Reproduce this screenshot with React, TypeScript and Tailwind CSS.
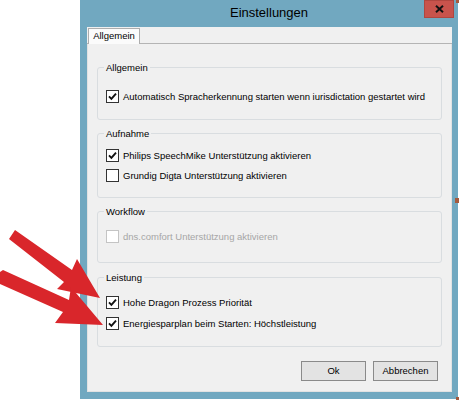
import { ReactNode } from "react";

const font = { fontFamily: '"Liberation Sans", Arial, sans-serif' };

const Check = ({ checked, disabled }: { checked?: boolean; disabled?: boolean }) => (
  <span
    className={`flex h-[13px] w-[13px] shrink-0 items-center justify-center border bg-white ${
      disabled ? "border-[#c4c4c4]" : "border-[#333333]"
    }`}
  >
    {checked && (
      <svg width="9" height="9" viewBox="0 0 9 9">
        <path d="M1 4.4 L3.4 6.8 L8 1.6" fill="none" stroke="#111" strokeWidth="1.9" />
      </svg>
    )}
  </span>
);

const Row = ({ label, checked, disabled }: { label: string; checked?: boolean; disabled?: boolean }) => (
  <div className="flex h-[13px] items-center gap-[4px]">
    <Check checked={checked} disabled={disabled} />
    <span className={`whitespace-nowrap leading-[13px] ${disabled ? "text-[#a6a6a6]" : "text-black"}`}>{label}</span>
  </div>
);

const Group = ({ title, className, children }: { title: string; className: string; children: ReactNode }) => (
  <div className={`relative mx-[9px] rounded-[3px] border border-[#d9dde0] pl-[8px] ${className}`}>
    <span className="absolute -top-[7px] left-[6px] bg-[#f0f0f0] px-[2px] leading-[13px] text-black">{title}</span>
    {children}
  </div>
);

export default function App() {
  return (
    <div className="relative h-[400px] w-[459px] overflow-hidden bg-white text-[9.5px]" style={font}>
      <div className="ml-[80px] flex h-[399px] w-[378px] flex-col bg-[#71a8c0]">
        {/* title bar */}
        <div className="relative flex h-[27px] items-center justify-center pb-[1px] text-[13px] text-black">
          Einstellungen
          <div className="absolute right-[4px] top-0 flex h-[18px] w-[30px] items-center justify-center border border-[#b0463f] bg-[#c8534c]">
            <svg width="9" height="8" viewBox="0 0 9 8">
              <path d="M1 0.8 L8 7.2 M8 0.8 L1 7.2" stroke="#111" strokeWidth="2" />
            </svg>
          </div>
        </div>

        <div className="ml-[7px] mr-[6px] flex h-[365px] flex-col bg-[#f0f0f0]">
          {/* tab strip */}
          <div className="flex h-[17px] items-end border-b border-[#b4b4b4]">
            <div className="relative -mb-px ml-[1px] flex h-[16px] w-[52px] items-center justify-center border border-b-0 border-[#adadad] bg-[#fbfbfb] pb-[1px]">
              Allgemein
            </div>
          </div>

          {/* pane */}
          <div className="flex flex-1 flex-col border border-t-0 border-[#e2e2e2] pt-[23px]">
            <Group title="Allgemein" className="h-[53px] pt-[22px]">
              <Row checked label="Automatisch Spracherkennung starten wenn iurisdictation gestartet wird" />
            </Group>

            <Group title="Aufnahme" className="mt-[13px] flex h-[65px] flex-col gap-[7px] pt-[15px]">
              <Row checked label="Philips SpeechMike Unterstützung aktivieren" />
              <Row label="Grundig Digta Unterstützung aktivieren" />
            </Group>

            <Group title="Workflow" className="mt-[13px] h-[52px] pt-[18px]">
              <Row disabled label="dns.comfort Unterstützung aktivieren" />
            </Group>

            <Group title="Leistung" className="mt-[14px] flex h-[70px] flex-col gap-[8px] pt-[18px]">
              <Row checked label="Hohe Dragon Prozess Priorität" />
              <Row checked label="Energiesparplan beim Starten: Höchstleistung" />
            </Group>

            <div className="mr-[13px] mt-[14px] flex justify-end gap-[7px]">
              <button className="flex h-[20px] w-[65px] items-center justify-center border border-[#8a8a8a] bg-[#e3e3e3] text-black">
                Ok
              </button>
              <button className="flex h-[20px] w-[65px] items-center justify-center border border-[#8a8a8a] bg-[#e3e3e3] text-black">
                Abbrechen
              </button>
            </div>
          </div>
        </div>
      </div>

      {/* red annotation arrows */}
      <svg className="absolute left-0 top-0" width="459" height="400" viewBox="0 0 459 400">
        <polygon
          fill="#d9262b"
          points="9,239 15,230 72,270 77,259 100,298 57,289 64,282"
        />
        <polygon
          fill="#d9262b"
          points="0,272 3,270 69,300 71,287 103,325 55,323 63,312 0,284"
        />
      </svg>

      {/* bits of the window behind */}
      <div className="absolute right-0 top-0 h-[3px] w-[3px] bg-[#a45a3e]" />
      <div className="absolute right-0 top-[198px] h-[5px] w-[4px] bg-[#a45a3e]" />
      <div className="absolute bottom-0 right-0 h-[3px] w-[3px] bg-[#a45a3e]" />
    </div>
  );
}
